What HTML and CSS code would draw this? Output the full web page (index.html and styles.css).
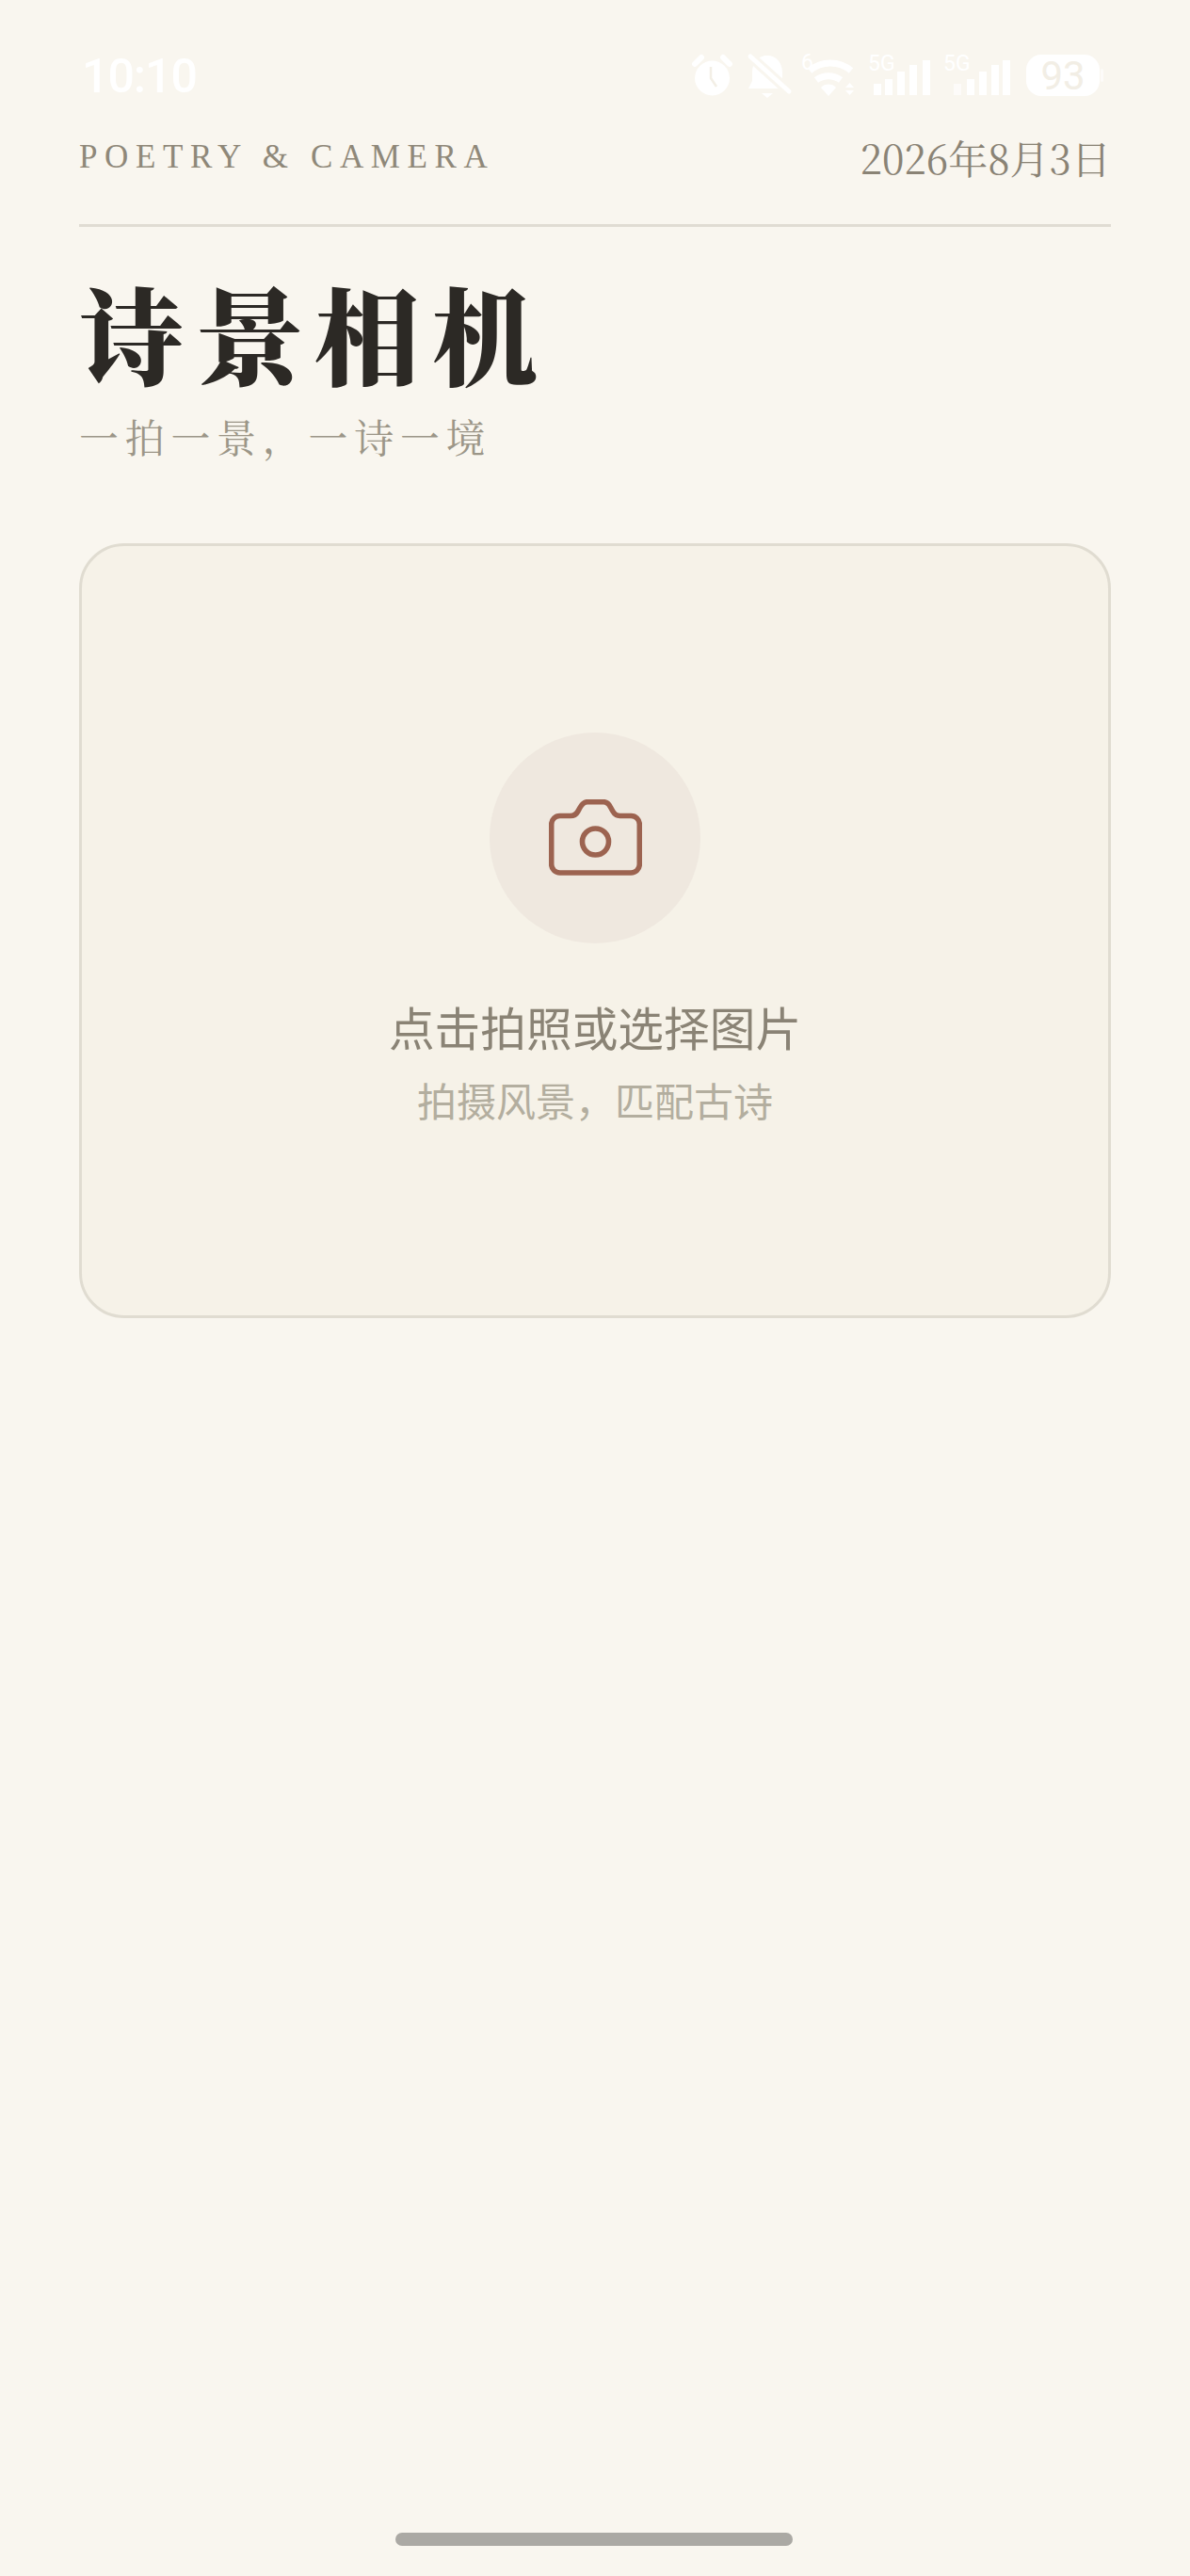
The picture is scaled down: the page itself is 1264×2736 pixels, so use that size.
FILE: index.html
```html
<!DOCTYPE html>
<html lang="zh-CN">
<head>
<meta charset="utf-8">
<title>诗景相机</title>
<link rel="stylesheet" href="styles.css">
</head>
<body>
<div class="page">
  <div class="status-bar">
    <span class="time">10:10</span>
    <div class="status-icons">
      <svg class="ic ic-alarm" viewBox="0 0 55 50">
        <circle cx="21.5" cy="27" r="18.5" fill="#fff"/>
        <path d="M3 12 10 5M40 12 33 5" stroke="#fff" stroke-width="6" stroke-linecap="round" fill="none"/>
        <path d="M20 15V27L26 36" stroke="#f3efe6" stroke-width="2.5" fill="none"/>
      </svg>
      <svg class="ic ic-bell" viewBox="0 0 56 50">
        <path d="M25 3C35 3 41 11 41 21V30L45 38H5L9 30V21C9 11 15 3 25 3Z" fill="#fff"/>
        <path d="M19 43H31L25 48Z" fill="#fff"/>
        <path d="M7 4 48 41" stroke="#f9f6ef" stroke-width="11" fill="none"/>
        <path d="M7 4 48 41" stroke="#fff" stroke-width="5" stroke-linecap="round" fill="none"/>
      </svg>
      <svg class="ic ic-wifi" viewBox="0 0 70 50">
        <text class="ic-label" x="5" y="18">6</text>
        <path d="M14 19A34 34 0 0 1 58 19M21 29A22 22 0 0 1 47 29" stroke="#fff" stroke-width="7" fill="none"/>
        <path d="M26 37A11 11 0 0 1 42 37L34 46Z" fill="#fff"/>
        <path d="M56.500 32 61 37H52ZM56.500 45 61 40H52Z" fill="#fff"/>
      </svg>
      <svg class="ic ic-sig1" viewBox="0 0 80 50">
        <text class="ic-label" x="6" y="19">5G</text>
        <rect x="12" y="33" width="8" height="12" fill="#fff"/>
        <rect x="24" y="28" width="8" height="17" fill="#fff"/>
        <rect x="37" y="20" width="8" height="25" fill="#fff"/>
        <rect x="50" y="13" width="8" height="32" fill="#fff"/>
        <rect x="64" y="8" width="8" height="37" fill="#fff"/>
      </svg>
      <svg class="ic ic-sig2" viewBox="0 0 87 50">
        <text class="ic-label" x="6" y="19">5G</text>
        <rect x="17" y="33" width="8" height="12" fill="#fff" opacity=".6"/>
        <rect x="31" y="28" width="8" height="17" fill="#fff"/>
        <rect x="44" y="20" width="8" height="25" fill="#fff"/>
        <rect x="57" y="13" width="8" height="32" fill="#fff"/>
        <rect x="69" y="8" width="8" height="37" fill="#fff"/>
      </svg>
      <svg class="ic ic-batt" viewBox="0 0 91 50">
        <rect x="7" y="2" width="78" height="44" rx="16" fill="#fff"/>
        <rect x="86" y="17" width="3" height="14" rx="1.500" fill="#fff" opacity=".6"/>
        <text class="batt-num" x="46" y="39">93</text>
      </svg>
    </div>
  </div>

  <main class="content">
    <header class="top-row">
      <span class="brand">POETRY &amp; CAMERA</span>
      <span class="date">2026年8月3日</span>
    </header>
    <h1 class="title">诗景相机</h1>
    <p class="tagline">一拍一景，一诗一境</p>

    <section class="upload-card">
      <div class="icon-circle">
        <svg class="camera" viewBox="0 0 99 81">
          <path d="M11.700 17.500H23C26.500 17.500 29 16 30.700 13L33.200 8.500C35.500 4.500 38 2.700 41 2.700H58C61 2.700 63.500 4.500 65.300 8L67.800 12.500C69.500 15.500 72 17.500 75.500 17.500H87.300A9 9 0 0 1 96.300 26.500V69A9 9 0 0 1 87.300 78H11.700A9 9 0 0 1 2.700 69V26.500A9 9 0 0 1 11.700 17.500Z"/>
          <circle cx="49.500" cy="45" r="14"/>
        </svg>
      </div>
      <p class="card-title">点击拍照或选择图片</p>
      <p class="card-sub">拍摄风景，匹配古诗</p>
    </section>
  </main>

  <div class="home-indicator"></div>
</div>
</body>
</html>
```
FILE: styles.css
```css
* { box-sizing: border-box; }
html, body { margin: 0; padding: 0; }
body {
  background: #f9f6ef;
  font-family: "Noto Serif CJK SC", "Liberation Serif", "Noto Sans CJK SC", serif;
}
.page {
  min-height: 2736px;
  display: flex;
  flex-direction: column;
}
.status-bar {
  display: flex;
  justify-content: space-between;
  align-items: center;
  height: 50px;
  margin-top: 56px;
  padding: 0 90px 0 87px;
}
.time {
  font-family: Roboto, sans-serif;
  font-weight: 500;
  font-size: 50px;
  letter-spacing: -1px;
  color: #fff;
  line-height: 52px;
}
.status-icons { display: flex; }
.ic { height: 50px; display: block; overflow: visible; }
.ic-alarm { width: 55px; }
.ic-bell { width: 56px; }
.ic-wifi { width: 70px; }
.ic-sig1 { width: 80px; }
.ic-sig2 { width: 87px; }
.ic-batt { width: 91px; }
.ic-label {
  font-family: Roboto, sans-serif;
  font-size: 23px;
  fill: #fff;
}
.batt-num {
  font-family: Roboto, sans-serif;
  font-size: 42px;
  fill: #f2eee5;
  text-anchor: middle;
}
.content {
  padding: 0 84px;
  display: flex;
  flex-direction: column;
}
.top-row {
  display: flex;
  justify-content: space-between;
  align-items: center;
  height: 135px;
  padding-bottom: 11px;
  border-bottom: 3px solid #e0dcd3;
}
.brand {
  font-family: "Liberation Serif", serif;
  font-size: 35px;
  letter-spacing: 7.600px;
  color: #8f8879;
}
.date {
  font-size: 42px;
  color: #8a8375;
}
.title {
  margin: 42px 0 0;
  font-size: 112px;
  font-weight: 900;
  line-height: 140px;
  letter-spacing: 13px;
  color: #2c2925;
}
.tagline {
  margin: 10px 0 0;
  font-size: 42px;
  line-height: 60px;
  letter-spacing: 6.700px;
  color: #9c9688;
}
.upload-card {
  margin-top: 84px;
  height: 823px;
  padding-bottom: 6px;
  border: 3px solid #e0dcd1;
  border-radius: 48px;
  background: #f6f2e8;
  display: flex;
  flex-direction: column;
  align-items: center;
  justify-content: center;
}
.icon-circle {
  width: 224px;
  height: 224px;
  border-radius: 50%;
  background: #efe8df;
  display: flex;
  align-items: center;
  justify-content: center;
}
.camera {
  width: 99px;
  height: 81px;
  fill: none;
  stroke: #9c6350;
  stroke-width: 5.600px;
}
.card-title {
  margin: 56px 0 0;
  font-family: "Noto Sans CJK SC", sans-serif;
  font-size: 48.700px;
  line-height: 64px;
  color: #8a8375;
}
.card-sub {
  margin: 20px 0 0;
  font-family: "Noto Sans CJK SC", sans-serif;
  font-size: 42px;
  line-height: 52px;
  color: #b3ae9f;
}
.home-indicator {
  margin: auto 0 32px 420px;
  width: 422px;
  height: 14px;
  border-radius: 7px;
  background: #aba9a4;
}
```
